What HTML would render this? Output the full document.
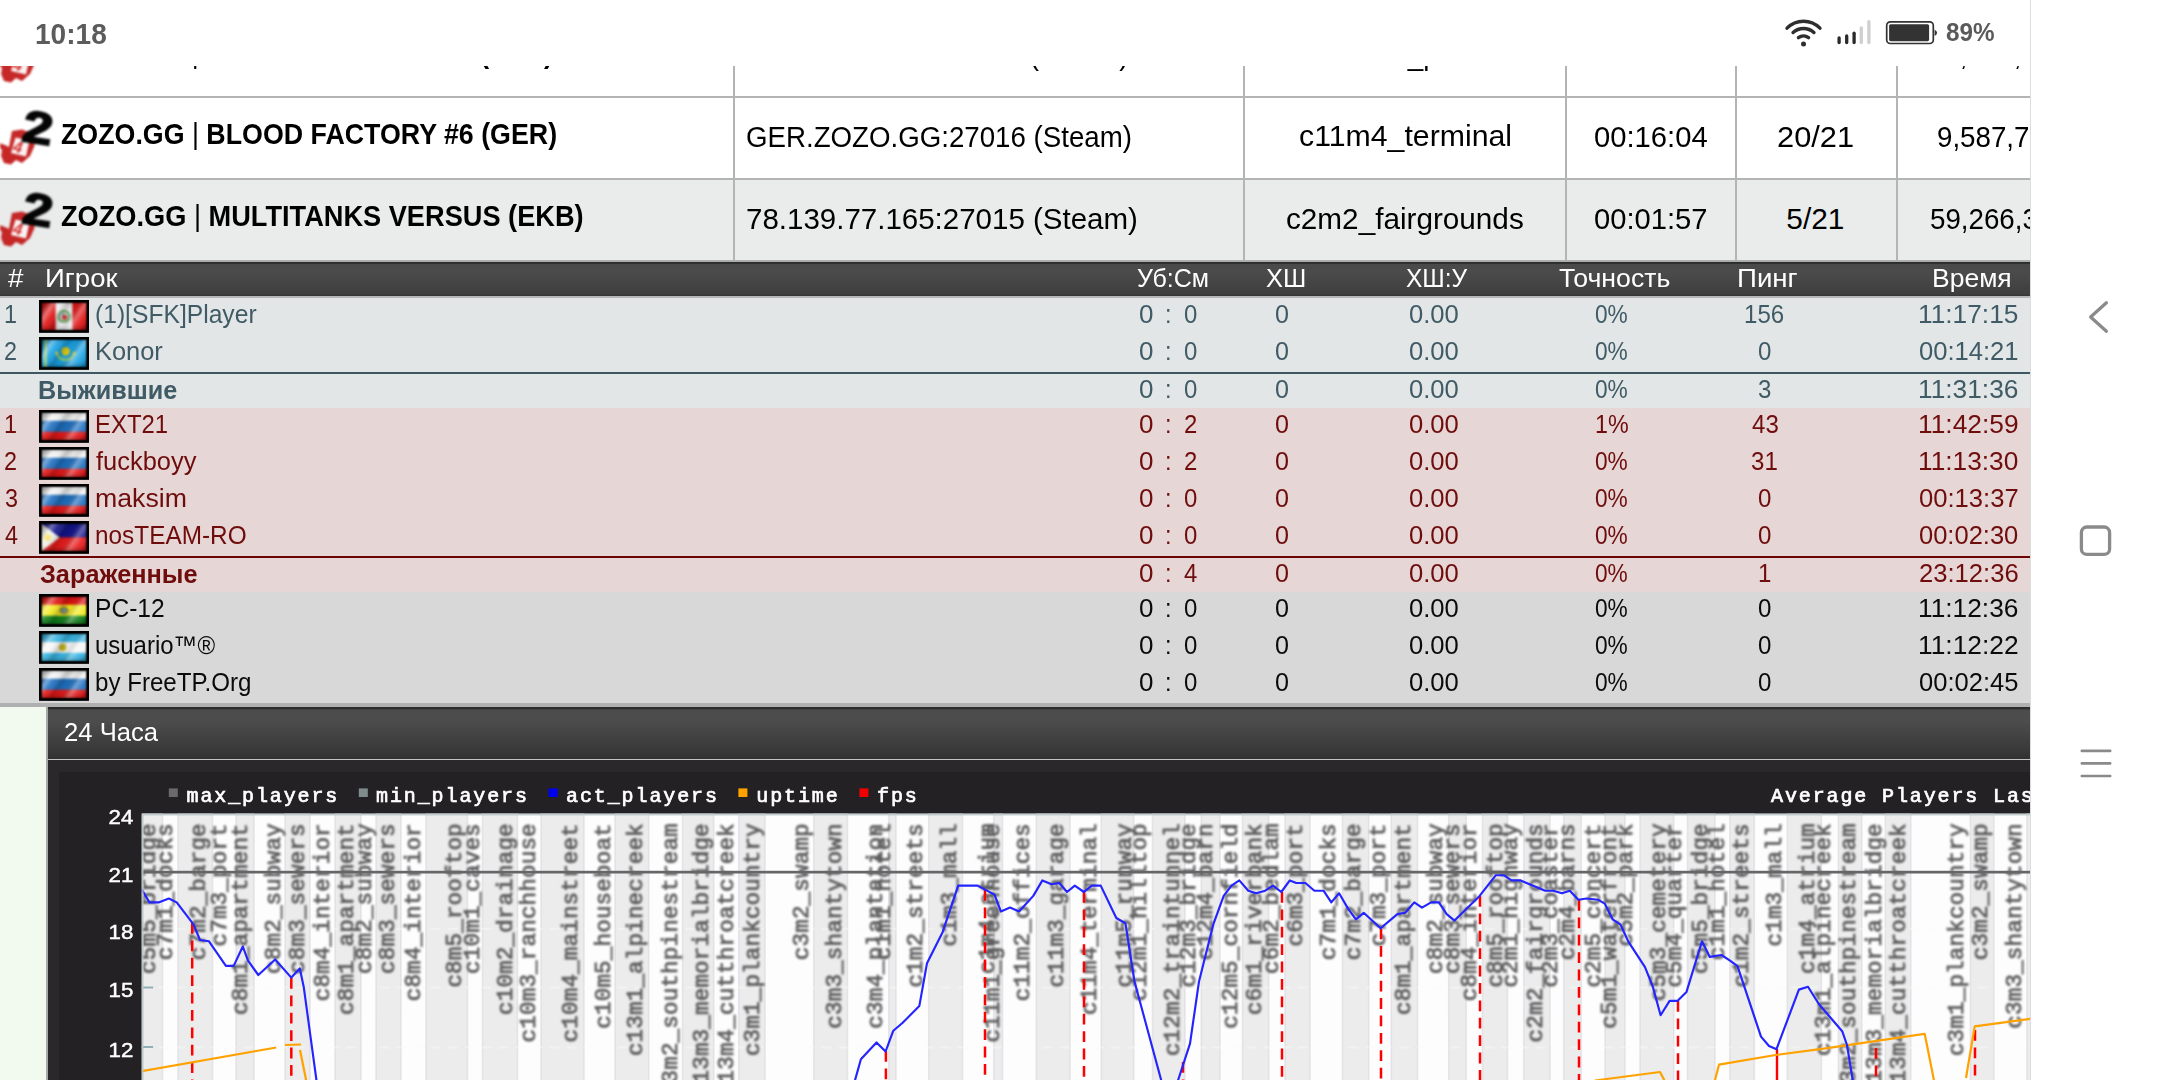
<!DOCTYPE html>
<html lang="ru">
<head>
<meta charset="utf-8">
<title>ZOZO.GG - HLstatsX</title>
<style>
html,body{margin:0;padding:0;background:#fff;}
body{width:2160px;height:1080px;overflow:hidden;position:relative;font-family:"Liberation Sans",sans-serif;}
.t{position:absolute;white-space:pre;line-height:1;transform-origin:0 0;display:block;}
#page{position:absolute;left:0;top:0;width:2030px;height:1080px;overflow:hidden;background:#fff;}
#status{position:absolute;left:0;top:0;width:2030px;height:66px;background:#fff;z-index:5;}
#nav{position:absolute;left:2030px;top:0;width:130px;height:1080px;background:#fff;border-left:1px solid #dcdcdc;box-sizing:border-box;}
</style>
</head>
<body>
<div id="page">
<div style="position:absolute;left:0px;top:66px;width:2030px;height:31px;background:#fff;"></div>
<div style="position:absolute;left:0px;top:98px;width:2030px;height:81px;background:#fff;"></div>
<div style="position:absolute;left:0px;top:180px;width:2030px;height:81px;background:#eaebeb;"></div>
<div style="position:absolute;left:0px;top:96px;width:2030px;height:2px;background:#b4b4b4;"></div>
<div style="position:absolute;left:0px;top:178px;width:2030px;height:2px;background:#b4b4b4;"></div>
<div style="position:absolute;left:733.4px;top:66px;width:1.8px;height:195px;background:#b4b4b4;"></div>
<div style="position:absolute;left:1243.4px;top:66px;width:1.8px;height:195px;background:#b4b4b4;"></div>
<div style="position:absolute;left:1564.9px;top:66px;width:1.8px;height:195px;background:#b4b4b4;"></div>
<div style="position:absolute;left:1734.9px;top:66px;width:1.8px;height:195px;background:#b4b4b4;"></div>
<div style="position:absolute;left:1895.9px;top:66px;width:1.8px;height:195px;background:#b4b4b4;"></div>
<svg style="position:absolute;left:0;top:20px;filter:blur(1px)" width="60" height="66" viewBox="0 0 60 66">
<path d="M12 29 L22 27.5 L34 32 L34.5 44 L30 54 L22 61 L16 58 L11 62.5 L4 61 L1 54 L2 48 L-1 45 L-1 41 L5 43 L9 45 Z" fill="#c21818" opacity="0.93"/>
<path d="M15.5 35.5 L29.5 38.5 L26 54.5 L11 51 Z" fill="#fbf3f3"/>
<text x="13.6" y="51" font-family="Liberation Sans, sans-serif" font-weight="bold" font-style="italic" font-size="16" fill="#d23030" transform="rotate(12 20 45)">4</text>
<text x="0" y="0" font-family="Liberation Sans, sans-serif" font-weight="bold" font-size="45" fill="#050505" stroke="#050505" stroke-width="1.8" transform="translate(20.8 38.8) rotate(9) scale(1.2 1)">2</text>
</svg>
<span class="t" style="left:60.52px;top:38.07px;font-size:29.80px;font-weight:bold;color:#000;transform:scaleX(0.8969);">ZOZO.GG <span style="font-weight:normal">|</span> BLOOD FACTORY #5 (SPB)</span>
<span class="t" style="left:745.72px;top:40.27px;font-size:29.80px;color:#000;transform:scaleX(0.9315);">SPB.ZOZO.GG:27015 (Steam)</span>
<span class="t" style="left:1339.84px;top:40.27px;font-size:29.80px;color:#000;transform:scaleX(0.9300);">c5m2_park</span>
<span class="t" style="left:1594.45px;top:40.27px;font-size:29.80px;color:#000;transform:scaleX(0.9300);">00:21:47</span>
<span class="t" style="left:1776.90px;top:40.27px;font-size:29.80px;color:#000;transform:scaleX(0.9300);">21/21</span>
<span class="t" style="left:1928.91px;top:40.27px;font-size:29.80px;color:#000;transform:scaleX(0.9300);">12,345,678</span>
<svg style="position:absolute;left:0;top:102px;filter:blur(1px)" width="60" height="66" viewBox="0 0 60 66">
<path d="M12 29 L22 27.5 L34 32 L34.5 44 L30 54 L22 61 L16 58 L11 62.5 L4 61 L1 54 L2 48 L-1 45 L-1 41 L5 43 L9 45 Z" fill="#c21818" opacity="0.93"/>
<path d="M15.5 35.5 L29.5 38.5 L26 54.5 L11 51 Z" fill="#fbf3f3"/>
<text x="13.6" y="51" font-family="Liberation Sans, sans-serif" font-weight="bold" font-style="italic" font-size="16" fill="#d23030" transform="rotate(12 20 45)">4</text>
<text x="0" y="0" font-family="Liberation Sans, sans-serif" font-weight="bold" font-size="45" fill="#050505" stroke="#050505" stroke-width="1.8" transform="translate(20.8 38.8) rotate(9) scale(1.2 1)">2</text>
</svg>
<span class="t" style="left:60.51px;top:119.27px;font-size:29.80px;font-weight:bold;color:#000;transform:scaleX(0.8989);">ZOZO.GG <span style="font-weight:normal">|</span> BLOOD FACTORY #6 (GER)</span>
<span class="t" style="left:745.61px;top:121.67px;font-size:29.80px;color:#000;transform:scaleX(0.9286);">GER.ZOZO.GG:27016 (Steam)</span>
<span class="t" style="left:1299.23px;top:121.37px;font-size:29.80px;color:#000;transform:scaleX(1.0158);">c11m4_terminal</span>
<span class="t" style="left:1594.40px;top:121.67px;font-size:29.80px;color:#000;transform:scaleX(0.9802);">00:16:04</span>
<span class="t" style="left:1776.75px;top:121.67px;font-size:29.80px;color:#000;transform:scaleX(1.0336);">20/21</span>
<span class="t" style="left:1937.42px;top:121.67px;font-size:29.80px;color:#000;transform:scaleX(0.9300);">9,587,712</span>
<svg style="position:absolute;left:0;top:184px;filter:blur(1px)" width="60" height="66" viewBox="0 0 60 66">
<path d="M12 29 L22 27.5 L34 32 L34.5 44 L30 54 L22 61 L16 58 L11 62.5 L4 61 L1 54 L2 48 L-1 45 L-1 41 L5 43 L9 45 Z" fill="#c21818" opacity="0.93"/>
<path d="M15.5 35.5 L29.5 38.5 L26 54.5 L11 51 Z" fill="#fbf3f3"/>
<text x="13.6" y="51" font-family="Liberation Sans, sans-serif" font-weight="bold" font-style="italic" font-size="16" fill="#d23030" transform="rotate(12 20 45)">4</text>
<text x="0" y="0" font-family="Liberation Sans, sans-serif" font-weight="bold" font-size="45" fill="#050505" stroke="#050505" stroke-width="1.8" transform="translate(20.8 38.8) rotate(9) scale(1.2 1)">2</text>
</svg>
<span class="t" style="left:60.50px;top:201.37px;font-size:29.80px;font-weight:bold;color:#000;transform:scaleX(0.9124);">ZOZO.GG <span style="font-weight:normal">|</span> MULTITANKS VERSUS (EKB)</span>
<span class="t" style="left:745.52px;top:204.07px;font-size:29.80px;color:#000;transform:scaleX(0.9898);">78.139.77.165:27015 (Steam)</span>
<span class="t" style="left:1286.25px;top:203.67px;font-size:29.80px;color:#000;transform:scaleX(0.9968);">c2m2_fairgrounds</span>
<span class="t" style="left:1594.40px;top:204.07px;font-size:29.80px;color:#000;transform:scaleX(0.9790);">00:01:57</span>
<span class="t" style="left:1786.35px;top:204.07px;font-size:29.80px;color:#000;">5/21</span>
<span class="t" style="left:1929.84px;top:204.07px;font-size:29.80px;color:#000;transform:scaleX(0.9300);">59,266,341</span>
<div style="position:absolute;left:0px;top:260px;width:2030px;height:2.2px;background:#adadad;"></div>
<div style="position:absolute;left:0px;top:262px;width:2030px;height:34px;background:linear-gradient(to bottom,#2a2a2a 0%,#2c2c2c 4%,#494949 7%,#4b4b4b 30%,#3e3e3e 95%,#333 100%);"></div>
<div style="position:absolute;left:0px;top:296px;width:2030px;height:2px;background:#b6b7b7;"></div>
<div style="position:absolute;left:0px;top:298px;width:2030px;height:110px;background:#e2e6e7;"></div>
<div style="position:absolute;left:0px;top:372.0px;width:2030px;height:2px;background:#3d5862;"></div>
<div style="position:absolute;left:0px;top:408px;width:2030px;height:184.3px;background:#e6d6d6;"></div>
<div style="position:absolute;left:0px;top:556.2px;width:2030px;height:2px;background:#6b0505;"></div>
<div style="position:absolute;left:0px;top:592.2px;width:2030px;height:111px;background:#d8d8d8;"></div>
<div style="position:absolute;left:0px;top:703px;width:2030px;height:3.6px;background:#b0b0b0;"></div>
<span class="t" style="left:7.67px;top:265.66px;font-size:25.80px;color:#fff;transform:scaleX(1.0761);">#</span>
<span class="t" style="left:44.73px;top:265.66px;font-size:25.80px;color:#fff;transform:scaleX(1.0677);">Игрок</span>
<span class="t" style="left:1136.77px;top:265.66px;font-size:25.80px;color:#fff;transform:scaleX(0.9720);">Уб:См</span>
<span class="t" style="left:1265.63px;top:265.66px;font-size:25.80px;color:#fff;transform:scaleX(0.9868);">ХШ</span>
<span class="t" style="left:1406.41px;top:265.66px;font-size:25.80px;color:#fff;transform:scaleX(0.9490);">ХШ:У</span>
<span class="t" style="left:1559.35px;top:265.66px;font-size:25.80px;color:#fff;transform:scaleX(1.0342);">Точность</span>
<span class="t" style="left:1737.22px;top:265.66px;font-size:25.80px;color:#fff;transform:scaleX(1.0723);">Пинг</span>
<span class="t" style="left:1932.32px;top:265.66px;font-size:25.80px;color:#fff;transform:scaleX(1.0272);">Время</span>
<svg width="0" height="0" style="position:absolute"><defs>
<linearGradient id="gl" gradientUnits="userSpaceOnUse" x1="2.2" y1="2.2" x2="47.2" y2="32.2">
<stop offset="0" stop-color="#000" stop-opacity="0.5"/><stop offset="0.07" stop-color="#000" stop-opacity="0.28"/>
<stop offset="0.19" stop-color="#fff" stop-opacity="0.42"/><stop offset="0.30" stop-color="#fff" stop-opacity="0.08"/>
<stop offset="0.42" stop-color="#000" stop-opacity="0.2"/><stop offset="0.55" stop-color="#000" stop-opacity="0.04"/>
<stop offset="0.69" stop-color="#fff" stop-opacity="0.36"/><stop offset="0.81" stop-color="#fff" stop-opacity="0.08"/>
<stop offset="0.92" stop-color="#000" stop-opacity="0.2"/><stop offset="1" stop-color="#000" stop-opacity="0.3"/>
</linearGradient>
<linearGradient id="gv" x1="0" y1="0" x2="0" y2="1">
<stop offset="0" stop-color="#000" stop-opacity="0.10"/><stop offset="0.2" stop-color="#000" stop-opacity="0"/>
<stop offset="0.8" stop-color="#000" stop-opacity="0"/><stop offset="1" stop-color="#000" stop-opacity="0.22"/>
</linearGradient>
<clipPath id="fc"><rect x="2.2" y="2.2" width="45.7" height="28.4"/></clipPath>
</defs></svg>
<span class="t" style="left:3.86px;top:302.27px;font-size:25.20px;color:#405b65;transform:scaleX(0.9300);">1</span>
<svg style="position:absolute;left:38.9px;top:300.1px" width="50.1" height="32.8" viewBox="0 0 50.1 32.8"><rect width="50.1" height="32.8" fill="#000"/><g clip-path="url(#fc)"><g style="filter:blur(0.95px)"><rect x="2.20" y="2.2" width="14.70" height="28.4" fill="#e01414"/><rect x="16.60" y="2.2" width="17.21" height="28.4" fill="#f6f6f6"/><rect x="33.50" y="2.2" width="14.70" height="28.4" fill="#e01414"/><circle cx="25" cy="16.4" r="5.3" fill="none" stroke="#55a050" stroke-width="2.8" opacity="0.8"/><circle cx="25.6" cy="17.2" r="2.7" fill="#d83a3a"/><circle cx="24.2" cy="14.8" r="1.2" fill="#5a7fc0" opacity="0.8"/><rect x="2.2" y="2.2" width="45.7" height="28.4" fill="url(#gl)"/><rect x="2.2" y="2.2" width="45.7" height="28.4" fill="url(#gv)"/></g></g><rect x="1.6" y="1.6" width="46.9" height="29.599999999999998" fill="none" stroke="#000" stroke-width="1.4" style="filter:blur(0.8px)"/></svg>
<span class="t" style="left:95.33px;top:302.27px;font-size:25.20px;color:#405b65;transform:scaleX(0.9785);">(1)[SFK]Player</span>
<span class="t" style="left:1138.97px;top:302.27px;font-size:25.20px;color:#405b65;transform:scaleX(1.0309);">0</span>
<span class="t" style="left:1164.91px;top:302.27px;font-size:25.20px;color:#405b65;transform:scaleX(0.9300);">:</span>
<span class="t" style="left:1184.05px;top:302.27px;font-size:25.20px;color:#405b65;transform:scaleX(0.9500);">0</span>
<span class="t" style="left:1274.50px;top:302.27px;font-size:25.20px;color:#405b65;transform:scaleX(0.9979);">0</span>
<span class="t" style="left:1408.98px;top:302.27px;font-size:25.20px;color:#405b65;transform:scaleX(1.0159);">0.00</span>
<span class="t" style="left:1595.40px;top:302.27px;font-size:25.20px;color:#405b65;transform:scaleX(0.9011);">0%</span>
<span class="t" style="left:1744.27px;top:302.27px;font-size:25.20px;color:#405b65;transform:scaleX(0.9550);">156</span>
<span class="t" style="left:1918.04px;top:302.27px;font-size:25.20px;color:#405b65;transform:scaleX(1.0439);">11:17:15</span>
<span class="t" style="left:4.44px;top:339.27px;font-size:25.20px;color:#405b65;transform:scaleX(0.9300);">2</span>
<svg style="position:absolute;left:38.9px;top:337.0px" width="50.1" height="32.8" viewBox="0 0 50.1 32.8"><rect width="50.1" height="32.8" fill="#000"/><g clip-path="url(#fc)"><g style="filter:blur(0.95px)"><rect x="2.2" y="2.2" width="45.7" height="28.4" fill="#19a2e4"/><rect x="5.4" y="2.2" width="2.6" height="28.4" fill="#b9d94c" opacity="0.8"/><circle cx="26.6" cy="14.2" r="4.2" fill="#e3d012"/><path d="M17.8 15.5 q1.2 6.8 8.6 7.4 q7.8 -0.6 9.2 -7.4" fill="none" stroke="#b9d84a" stroke-width="2.1" stroke-linecap="round" opacity="0.85"/><circle cx="18" cy="16.4" r="1.7" fill="#c6d93a" opacity="0.9"/><circle cx="35.2" cy="16.2" r="1.7" fill="#c6d93a" opacity="0.9"/><rect x="2.2" y="2.2" width="45.7" height="28.4" fill="url(#gl)"/><rect x="2.2" y="2.2" width="45.7" height="28.4" fill="url(#gv)"/></g></g><rect x="1.6" y="1.6" width="46.9" height="29.599999999999998" fill="none" stroke="#000" stroke-width="1.4" style="filter:blur(0.8px)"/></svg>
<span class="t" style="left:94.78px;top:339.27px;font-size:25.20px;color:#405b65;transform:scaleX(1.0092);">Konor</span>
<span class="t" style="left:1138.97px;top:339.27px;font-size:25.20px;color:#405b65;transform:scaleX(1.0309);">0</span>
<span class="t" style="left:1164.91px;top:339.27px;font-size:25.20px;color:#405b65;transform:scaleX(0.9300);">:</span>
<span class="t" style="left:1184.05px;top:339.27px;font-size:25.20px;color:#405b65;transform:scaleX(0.9500);">0</span>
<span class="t" style="left:1274.50px;top:339.27px;font-size:25.20px;color:#405b65;transform:scaleX(0.9979);">0</span>
<span class="t" style="left:1408.98px;top:339.27px;font-size:25.20px;color:#405b65;transform:scaleX(1.0159);">0.00</span>
<span class="t" style="left:1595.40px;top:339.27px;font-size:25.20px;color:#405b65;transform:scaleX(0.9011);">0%</span>
<span class="t" style="left:1758.06px;top:339.27px;font-size:25.20px;color:#405b65;transform:scaleX(0.9550);">0</span>
<span class="t" style="left:1918.98px;top:339.27px;font-size:25.20px;color:#405b65;transform:scaleX(1.0153);">00:14:21</span>
<span class="t" style="left:38.47px;top:377.71px;font-size:25.50px;font-weight:bold;color:#405b65;transform:scaleX(0.9897);">Выжившие</span>
<span class="t" style="left:1138.97px;top:377.27px;font-size:25.20px;color:#405b65;transform:scaleX(1.0309);">0</span>
<span class="t" style="left:1164.91px;top:377.27px;font-size:25.20px;color:#405b65;transform:scaleX(0.9300);">:</span>
<span class="t" style="left:1184.05px;top:377.27px;font-size:25.20px;color:#405b65;transform:scaleX(0.9500);">0</span>
<span class="t" style="left:1274.50px;top:377.27px;font-size:25.20px;color:#405b65;transform:scaleX(0.9979);">0</span>
<span class="t" style="left:1408.98px;top:377.27px;font-size:25.20px;color:#405b65;transform:scaleX(1.0159);">0.00</span>
<span class="t" style="left:1595.40px;top:377.27px;font-size:25.20px;color:#405b65;transform:scaleX(0.9011);">0%</span>
<span class="t" style="left:1758.12px;top:377.27px;font-size:25.20px;color:#405b65;transform:scaleX(0.9550);">3</span>
<span class="t" style="left:1918.04px;top:377.27px;font-size:25.20px;color:#405b65;transform:scaleX(1.0439);">11:31:36</span>
<span class="t" style="left:3.86px;top:412.27px;font-size:25.20px;color:#6f0c0c;transform:scaleX(0.9300);">1</span>
<svg style="position:absolute;left:38.9px;top:410.1px" width="50.1" height="32.8" viewBox="0 0 50.1 32.8"><rect width="50.1" height="32.8" fill="#000"/><g clip-path="url(#fc)"><g style="filter:blur(0.95px)"><rect x="2.2" y="2.20" width="45.7" height="8.82" fill="#f4f4f4"/><rect x="2.2" y="10.72" width="45.7" height="11.38" fill="#1f70c0"/><rect x="2.2" y="21.80" width="45.7" height="9.10" fill="#e81818"/><rect x="2.2" y="2.2" width="45.7" height="28.4" fill="url(#gl)"/><rect x="2.2" y="2.2" width="45.7" height="28.4" fill="url(#gv)"/></g></g><rect x="1.6" y="1.6" width="46.9" height="29.599999999999998" fill="none" stroke="#000" stroke-width="1.4" style="filter:blur(0.8px)"/></svg>
<span class="t" style="left:94.90px;top:412.27px;font-size:25.20px;color:#6f0c0c;transform:scaleX(0.9500);">EXT21</span>
<span class="t" style="left:1138.97px;top:412.27px;font-size:25.20px;color:#6f0c0c;transform:scaleX(1.0309);">0</span>
<span class="t" style="left:1164.91px;top:412.27px;font-size:25.20px;color:#6f0c0c;transform:scaleX(0.9300);">:</span>
<span class="t" style="left:1183.81px;top:412.27px;font-size:25.20px;color:#6f0c0c;transform:scaleX(0.9500);">2</span>
<span class="t" style="left:1274.50px;top:412.27px;font-size:25.20px;color:#6f0c0c;transform:scaleX(0.9979);">0</span>
<span class="t" style="left:1408.98px;top:412.27px;font-size:25.20px;color:#6f0c0c;transform:scaleX(1.0159);">0.00</span>
<span class="t" style="left:1594.57px;top:412.27px;font-size:25.20px;color:#6f0c0c;transform:scaleX(0.9244);">1%</span>
<span class="t" style="left:1751.61px;top:412.27px;font-size:25.20px;color:#6f0c0c;transform:scaleX(0.9550);">43</span>
<span class="t" style="left:1918.04px;top:412.27px;font-size:25.20px;color:#6f0c0c;transform:scaleX(1.0452);">11:42:59</span>
<span class="t" style="left:4.44px;top:449.27px;font-size:25.20px;color:#6f0c0c;transform:scaleX(0.9300);">2</span>
<svg style="position:absolute;left:38.9px;top:447.1px" width="50.1" height="32.8" viewBox="0 0 50.1 32.8"><rect width="50.1" height="32.8" fill="#000"/><g clip-path="url(#fc)"><g style="filter:blur(0.95px)"><rect x="2.2" y="2.20" width="45.7" height="8.82" fill="#f4f4f4"/><rect x="2.2" y="10.72" width="45.7" height="11.38" fill="#1f70c0"/><rect x="2.2" y="21.80" width="45.7" height="9.10" fill="#e81818"/><rect x="2.2" y="2.2" width="45.7" height="28.4" fill="url(#gl)"/><rect x="2.2" y="2.2" width="45.7" height="28.4" fill="url(#gv)"/></g></g><rect x="1.6" y="1.6" width="46.9" height="29.599999999999998" fill="none" stroke="#000" stroke-width="1.4" style="filter:blur(0.8px)"/></svg>
<span class="t" style="left:96.42px;top:449.27px;font-size:25.20px;color:#6f0c0c;transform:scaleX(1.0106);">fuckboyy</span>
<span class="t" style="left:1138.97px;top:449.27px;font-size:25.20px;color:#6f0c0c;transform:scaleX(1.0309);">0</span>
<span class="t" style="left:1164.91px;top:449.27px;font-size:25.20px;color:#6f0c0c;transform:scaleX(0.9300);">:</span>
<span class="t" style="left:1183.81px;top:449.27px;font-size:25.20px;color:#6f0c0c;transform:scaleX(0.9500);">2</span>
<span class="t" style="left:1274.50px;top:449.27px;font-size:25.20px;color:#6f0c0c;transform:scaleX(0.9979);">0</span>
<span class="t" style="left:1408.98px;top:449.27px;font-size:25.20px;color:#6f0c0c;transform:scaleX(1.0159);">0.00</span>
<span class="t" style="left:1595.40px;top:449.27px;font-size:25.20px;color:#6f0c0c;transform:scaleX(0.9011);">0%</span>
<span class="t" style="left:1751.49px;top:449.27px;font-size:25.20px;color:#6f0c0c;transform:scaleX(0.9550);">31</span>
<span class="t" style="left:1918.05px;top:449.27px;font-size:25.20px;color:#6f0c0c;transform:scaleX(1.0425);">11:13:30</span>
<span class="t" style="left:4.67px;top:486.27px;font-size:25.20px;color:#6f0c0c;transform:scaleX(0.9300);">3</span>
<svg style="position:absolute;left:38.9px;top:484.1px" width="50.1" height="32.8" viewBox="0 0 50.1 32.8"><rect width="50.1" height="32.8" fill="#000"/><g clip-path="url(#fc)"><g style="filter:blur(0.95px)"><rect x="2.2" y="2.20" width="45.7" height="8.82" fill="#f4f4f4"/><rect x="2.2" y="10.72" width="45.7" height="11.38" fill="#1f70c0"/><rect x="2.2" y="21.80" width="45.7" height="9.10" fill="#e81818"/><rect x="2.2" y="2.2" width="45.7" height="28.4" fill="url(#gl)"/><rect x="2.2" y="2.2" width="45.7" height="28.4" fill="url(#gv)"/></g></g><rect x="1.6" y="1.6" width="46.9" height="29.599999999999998" fill="none" stroke="#000" stroke-width="1.4" style="filter:blur(0.8px)"/></svg>
<span class="t" style="left:95.08px;top:486.27px;font-size:25.20px;color:#6f0c0c;transform:scaleX(1.0595);">maksim</span>
<span class="t" style="left:1138.97px;top:486.27px;font-size:25.20px;color:#6f0c0c;transform:scaleX(1.0309);">0</span>
<span class="t" style="left:1164.91px;top:486.27px;font-size:25.20px;color:#6f0c0c;transform:scaleX(0.9300);">:</span>
<span class="t" style="left:1184.05px;top:486.27px;font-size:25.20px;color:#6f0c0c;transform:scaleX(0.9500);">0</span>
<span class="t" style="left:1274.50px;top:486.27px;font-size:25.20px;color:#6f0c0c;transform:scaleX(0.9979);">0</span>
<span class="t" style="left:1408.98px;top:486.27px;font-size:25.20px;color:#6f0c0c;transform:scaleX(1.0159);">0.00</span>
<span class="t" style="left:1595.40px;top:486.27px;font-size:25.20px;color:#6f0c0c;transform:scaleX(0.9011);">0%</span>
<span class="t" style="left:1758.06px;top:486.27px;font-size:25.20px;color:#6f0c0c;transform:scaleX(0.9550);">0</span>
<span class="t" style="left:1918.98px;top:486.27px;font-size:25.20px;color:#6f0c0c;transform:scaleX(1.0167);">00:13:37</span>
<span class="t" style="left:5.02px;top:523.27px;font-size:25.20px;color:#6f0c0c;transform:scaleX(0.9300);">4</span>
<svg style="position:absolute;left:38.9px;top:521.1px" width="50.1" height="32.8" viewBox="0 0 50.1 32.8"><rect width="50.1" height="32.8" fill="#000"/><g clip-path="url(#fc)"><g style="filter:blur(0.95px)"><rect x="2.2" y="2.2" width="45.7" height="14.40" fill="#14148c"/><rect x="2.2" y="16.40" width="45.7" height="14.20" fill="#ea1c1c"/><path d="M2.2 2.2 L20.7 16.40 L2.2 30.599999999999998 Z" fill="#efefe6"/><circle cx="8.3" cy="16.4" r="3.3" fill="#f3dc4a"/><rect x="2.2" y="2.2" width="45.7" height="28.4" fill="url(#gl)"/><rect x="2.2" y="2.2" width="45.7" height="28.4" fill="url(#gv)"/></g></g><rect x="1.6" y="1.6" width="46.9" height="29.599999999999998" fill="none" stroke="#000" stroke-width="1.4" style="filter:blur(0.8px)"/></svg>
<span class="t" style="left:95.23px;top:523.27px;font-size:25.20px;color:#6f0c0c;transform:scaleX(0.9671);">nosTEAM-RO</span>
<span class="t" style="left:1138.97px;top:523.27px;font-size:25.20px;color:#6f0c0c;transform:scaleX(1.0309);">0</span>
<span class="t" style="left:1164.91px;top:523.27px;font-size:25.20px;color:#6f0c0c;transform:scaleX(0.9300);">:</span>
<span class="t" style="left:1184.05px;top:523.27px;font-size:25.20px;color:#6f0c0c;transform:scaleX(0.9500);">0</span>
<span class="t" style="left:1274.50px;top:523.27px;font-size:25.20px;color:#6f0c0c;transform:scaleX(0.9979);">0</span>
<span class="t" style="left:1408.98px;top:523.27px;font-size:25.20px;color:#6f0c0c;transform:scaleX(1.0159);">0.00</span>
<span class="t" style="left:1595.40px;top:523.27px;font-size:25.20px;color:#6f0c0c;transform:scaleX(0.9011);">0%</span>
<span class="t" style="left:1758.06px;top:523.27px;font-size:25.20px;color:#6f0c0c;transform:scaleX(0.9550);">0</span>
<span class="t" style="left:1918.99px;top:523.27px;font-size:25.20px;color:#6f0c0c;transform:scaleX(1.0127);">00:02:30</span>
<span class="t" style="left:39.58px;top:561.71px;font-size:25.50px;font-weight:bold;color:#6f0c0c;transform:scaleX(0.9935);">Зараженные</span>
<span class="t" style="left:1138.97px;top:561.27px;font-size:25.20px;color:#6f0c0c;transform:scaleX(1.0309);">0</span>
<span class="t" style="left:1164.91px;top:561.27px;font-size:25.20px;color:#6f0c0c;transform:scaleX(0.9300);">:</span>
<span class="t" style="left:1184.41px;top:561.27px;font-size:25.20px;color:#6f0c0c;transform:scaleX(0.9500);">4</span>
<span class="t" style="left:1274.50px;top:561.27px;font-size:25.20px;color:#6f0c0c;transform:scaleX(0.9979);">0</span>
<span class="t" style="left:1408.98px;top:561.27px;font-size:25.20px;color:#6f0c0c;transform:scaleX(1.0159);">0.00</span>
<span class="t" style="left:1595.40px;top:561.27px;font-size:25.20px;color:#6f0c0c;transform:scaleX(0.9011);">0%</span>
<span class="t" style="left:1757.76px;top:561.27px;font-size:25.20px;color:#6f0c0c;transform:scaleX(0.9550);">1</span>
<span class="t" style="left:1918.73px;top:561.27px;font-size:25.20px;color:#6f0c0c;transform:scaleX(1.0167);">23:12:36</span>
<svg style="position:absolute;left:38.9px;top:594.1px" width="50.1" height="32.8" viewBox="0 0 50.1 32.8"><rect width="50.1" height="32.8" fill="#000"/><g clip-path="url(#fc)"><g style="filter:blur(0.95px)"><rect x="2.2" y="2.20" width="45.7" height="8.82" fill="#e41212"/><rect x="2.2" y="10.72" width="45.7" height="11.38" fill="#f2ea22"/><rect x="2.2" y="21.80" width="45.7" height="9.10" fill="#13831d"/><ellipse cx="25" cy="16.6" rx="4.8" ry="4.2" fill="#b07a28" opacity="0.9"/><ellipse cx="25" cy="16.6" rx="2.8" ry="2.6" fill="#5d9a90"/><rect x="2.2" y="2.2" width="45.7" height="28.4" fill="url(#gl)"/><rect x="2.2" y="2.2" width="45.7" height="28.4" fill="url(#gv)"/></g></g><rect x="1.6" y="1.6" width="46.9" height="29.599999999999998" fill="none" stroke="#000" stroke-width="1.4" style="filter:blur(0.8px)"/></svg>
<span class="t" style="left:94.85px;top:596.27px;font-size:25.20px;color:#0b0b0b;transform:scaleX(0.9758);">PC-12</span>
<span class="t" style="left:1138.97px;top:596.27px;font-size:25.20px;color:#0b0b0b;transform:scaleX(1.0309);">0</span>
<span class="t" style="left:1164.91px;top:596.27px;font-size:25.20px;color:#0b0b0b;transform:scaleX(0.9300);">:</span>
<span class="t" style="left:1184.05px;top:596.27px;font-size:25.20px;color:#0b0b0b;transform:scaleX(0.9500);">0</span>
<span class="t" style="left:1274.50px;top:596.27px;font-size:25.20px;color:#0b0b0b;transform:scaleX(0.9979);">0</span>
<span class="t" style="left:1408.98px;top:596.27px;font-size:25.20px;color:#0b0b0b;transform:scaleX(1.0159);">0.00</span>
<span class="t" style="left:1595.40px;top:596.27px;font-size:25.20px;color:#0b0b0b;transform:scaleX(0.9011);">0%</span>
<span class="t" style="left:1758.06px;top:596.27px;font-size:25.20px;color:#0b0b0b;transform:scaleX(0.9550);">0</span>
<span class="t" style="left:1918.04px;top:596.27px;font-size:25.20px;color:#0b0b0b;transform:scaleX(1.0439);">11:12:36</span>
<svg style="position:absolute;left:38.9px;top:631.0px" width="50.1" height="32.8" viewBox="0 0 50.1 32.8"><rect width="50.1" height="32.8" fill="#000"/><g clip-path="url(#fc)"><g style="filter:blur(0.95px)"><rect x="2.2" y="2.20" width="45.7" height="9.10" fill="#3ab8e6"/><rect x="2.2" y="11.00" width="45.7" height="11.09" fill="#f6f6f6"/><rect x="2.2" y="21.80" width="45.7" height="9.10" fill="#3ab8e6"/><circle cx="23.6" cy="16.4" r="3.7" fill="#c9b81e"/><rect x="2.2" y="2.2" width="45.7" height="28.4" fill="url(#gl)"/><rect x="2.2" y="2.2" width="45.7" height="28.4" fill="url(#gv)"/></g></g><rect x="1.6" y="1.6" width="46.9" height="29.599999999999998" fill="none" stroke="#000" stroke-width="1.4" style="filter:blur(0.8px)"/></svg>
<span class="t" style="left:95.26px;top:633.27px;font-size:25.20px;color:#0b0b0b;transform:scaleX(0.9507);">usuario™®</span>
<span class="t" style="left:1138.97px;top:633.27px;font-size:25.20px;color:#0b0b0b;transform:scaleX(1.0309);">0</span>
<span class="t" style="left:1164.91px;top:633.27px;font-size:25.20px;color:#0b0b0b;transform:scaleX(0.9300);">:</span>
<span class="t" style="left:1184.05px;top:633.27px;font-size:25.20px;color:#0b0b0b;transform:scaleX(0.9500);">0</span>
<span class="t" style="left:1274.50px;top:633.27px;font-size:25.20px;color:#0b0b0b;transform:scaleX(0.9979);">0</span>
<span class="t" style="left:1408.98px;top:633.27px;font-size:25.20px;color:#0b0b0b;transform:scaleX(1.0159);">0.00</span>
<span class="t" style="left:1595.40px;top:633.27px;font-size:25.20px;color:#0b0b0b;transform:scaleX(0.9011);">0%</span>
<span class="t" style="left:1758.06px;top:633.27px;font-size:25.20px;color:#0b0b0b;transform:scaleX(0.9550);">0</span>
<span class="t" style="left:1918.04px;top:633.27px;font-size:25.20px;color:#0b0b0b;transform:scaleX(1.0466);">11:12:22</span>
<svg style="position:absolute;left:38.9px;top:668.0px" width="50.1" height="32.8" viewBox="0 0 50.1 32.8"><rect width="50.1" height="32.8" fill="#000"/><g clip-path="url(#fc)"><g style="filter:blur(0.95px)"><rect x="2.2" y="2.20" width="45.7" height="8.82" fill="#f4f4f4"/><rect x="2.2" y="10.72" width="45.7" height="11.38" fill="#1f70c0"/><rect x="2.2" y="21.80" width="45.7" height="9.10" fill="#e81818"/><rect x="2.2" y="2.2" width="45.7" height="28.4" fill="url(#gl)"/><rect x="2.2" y="2.2" width="45.7" height="28.4" fill="url(#gv)"/></g></g><rect x="1.6" y="1.6" width="46.9" height="29.599999999999998" fill="none" stroke="#000" stroke-width="1.4" style="filter:blur(0.8px)"/></svg>
<span class="t" style="left:95.24px;top:670.27px;font-size:25.20px;color:#0b0b0b;transform:scaleX(0.9578);">by FreeTP.Org</span>
<span class="t" style="left:1138.97px;top:670.27px;font-size:25.20px;color:#0b0b0b;transform:scaleX(1.0309);">0</span>
<span class="t" style="left:1164.91px;top:670.27px;font-size:25.20px;color:#0b0b0b;transform:scaleX(0.9300);">:</span>
<span class="t" style="left:1184.05px;top:670.27px;font-size:25.20px;color:#0b0b0b;transform:scaleX(0.9500);">0</span>
<span class="t" style="left:1274.50px;top:670.27px;font-size:25.20px;color:#0b0b0b;transform:scaleX(0.9979);">0</span>
<span class="t" style="left:1408.98px;top:670.27px;font-size:25.20px;color:#0b0b0b;transform:scaleX(1.0159);">0.00</span>
<span class="t" style="left:1595.40px;top:670.27px;font-size:25.20px;color:#0b0b0b;transform:scaleX(0.9011);">0%</span>
<span class="t" style="left:1758.06px;top:670.27px;font-size:25.20px;color:#0b0b0b;transform:scaleX(0.9550);">0</span>
<span class="t" style="left:1918.99px;top:670.27px;font-size:25.20px;color:#0b0b0b;transform:scaleX(1.0140);">00:02:45</span>
<div style="position:absolute;left:0px;top:706.5px;width:46.4px;height:374px;background:#f2f9ef;"></div>
<div style="position:absolute;left:46.2px;top:706.5px;width:2px;height:374px;background:#a8a8a8;"></div>
<div style="position:absolute;left:48px;top:706.8px;width:1982px;height:52px;background:linear-gradient(to bottom,#2b2b2b 0%,#2d2d2d 3%,#4c4c4c 6%,#4d4d4d 25%,#3a3a3a 80%,#303030 100%);"></div>
<div style="position:absolute;left:48px;top:758.6px;width:1982px;height:1.9px;background:#c2c2c2;"></div>
<div style="position:absolute;left:48px;top:760.4px;width:1982px;height:320px;background:#2a282b;"></div>
<div style="position:absolute;left:59.2px;top:771.8px;width:1971px;height:309px;background:#232124;"></div>
<span class="t" style="left:64.36px;top:720.16px;font-size:25.80px;color:#fff;transform:scaleX(0.9941);">24 Часа</span>
<svg style="position:absolute;left:0;top:0" width="2030" height="1080" viewBox="0 0 2030 1080" font-family="Liberation Mono, monospace">
<defs><clipPath id="plot"><rect x="141.6" y="813.4" width="1888.4" height="266.6"/></clipPath><filter id="b1" x="-5%" y="-5%" width="110%" height="110%"><feGaussianBlur stdDeviation="0.8"/></filter><filter id="b2" x="-5%" y="-5%" width="110%" height="110%"><feGaussianBlur stdDeviation="0.55"/></filter></defs>
<rect x="168.8" y="788.4" width="9" height="8.6" fill="#6a6a6c"/><text x="186.5" y="801.8" font-size="20" letter-spacing="1.88" stroke="#fff" stroke-width="0.7" fill="#fff" filter="url(#b2)">max_players</text>
<rect x="358.8" y="788.4" width="9" height="8.6" fill="#7e8c8c"/><text x="376.1" y="801.8" font-size="20" letter-spacing="1.88" stroke="#fff" stroke-width="0.7" fill="#fff" filter="url(#b2)">min_players</text>
<rect x="548.6" y="788.4" width="9" height="8.6" fill="#0000f0"/><text x="566.1" y="801.8" font-size="20" letter-spacing="1.88" stroke="#fff" stroke-width="0.7" fill="#fff" filter="url(#b2)">act_players</text>
<rect x="738.4" y="788.4" width="9" height="8.6" fill="#ffa200"/><text x="756.3" y="801.8" font-size="20" letter-spacing="1.88" stroke="#fff" stroke-width="0.7" fill="#fff" filter="url(#b2)">uptime</text>
<rect x="859.4" y="788.4" width="9" height="8.6" fill="#f00000"/><text x="877.1" y="801.8" font-size="20" letter-spacing="1.88" stroke="#fff" stroke-width="0.7" fill="#fff" filter="url(#b2)">fps</text>
<text x="1771" y="801.8" font-size="20" letter-spacing="1.88" stroke="#fff" stroke-width="0.7" fill="#fff" filter="url(#b2)">Average Players Last 24h: 11.87</text>
<text x="108.6" y="823.8" font-family="Liberation Sans, sans-serif" font-size="20.4" fill="#fff" stroke="#fff" stroke-width="0.45" filter="url(#b2)" textLength="24.8" lengthAdjust="spacingAndGlyphs">24</text>
<text x="108.6" y="881.6" font-family="Liberation Sans, sans-serif" font-size="20.4" fill="#fff" stroke="#fff" stroke-width="0.45" filter="url(#b2)" textLength="24.8" lengthAdjust="spacingAndGlyphs">21</text>
<text x="108.6" y="939.2" font-family="Liberation Sans, sans-serif" font-size="20.4" fill="#fff" stroke="#fff" stroke-width="0.45" filter="url(#b2)" textLength="24.8" lengthAdjust="spacingAndGlyphs">18</text>
<text x="108.6" y="996.9" font-family="Liberation Sans, sans-serif" font-size="20.4" fill="#fff" stroke="#fff" stroke-width="0.45" filter="url(#b2)" textLength="24.8" lengthAdjust="spacingAndGlyphs">15</text>
<text x="108.6" y="1057.0" font-family="Liberation Sans, sans-serif" font-size="20.4" fill="#fff" stroke="#fff" stroke-width="0.45" filter="url(#b2)" textLength="24.8" lengthAdjust="spacingAndGlyphs">12</text>
<g clip-path="url(#plot)">
<rect x="141.6" y="813.4" width="1888.4" height="266.6" fill="#fcfdfc"/>
<rect x="141.75" y="813.4" width="20.75" height="266.6" fill="#ebeceb"/>
<rect x="178.00" y="813.4" width="34.50" height="266.6" fill="#ebeceb"/>
<rect x="236.00" y="813.4" width="18.00" height="266.6" fill="#ebeceb"/>
<rect x="285.00" y="813.4" width="25.00" height="266.6" fill="#ebeceb"/>
<rect x="335.00" y="813.4" width="26.00" height="266.6" fill="#ebeceb"/>
<rect x="376.00" y="813.4" width="25.00" height="266.6" fill="#ebeceb"/>
<rect x="426.00" y="813.4" width="41.50" height="266.6" fill="#ebeceb"/>
<rect x="482.50" y="813.4" width="35.00" height="266.6" fill="#ebeceb"/>
<rect x="541.00" y="813.4" width="43.00" height="266.6" fill="#ebeceb"/>
<rect x="615.00" y="813.4" width="33.75" height="266.6" fill="#ebeceb"/>
<rect x="682.50" y="813.4" width="31.25" height="266.6" fill="#ebeceb"/>
<rect x="738.75" y="813.4" width="26.25" height="266.6" fill="#ebeceb"/>
<rect x="813.75" y="813.4" width="33.75" height="266.6" fill="#ebeceb"/>
<rect x="888.75" y="813.4" width="7.25" height="266.6" fill="#ebeceb"/>
<rect x="928.75" y="813.4" width="33.75" height="266.6" fill="#ebeceb"/>
<rect x="993.75" y="813.4" width="8.75" height="266.6" fill="#ebeceb"/>
<rect x="1036.25" y="813.4" width="33.75" height="266.6" fill="#ebeceb"/>
<rect x="1101.25" y="813.4" width="32.50" height="266.6" fill="#ebeceb"/>
<rect x="1152.50" y="813.4" width="32.50" height="266.6" fill="#ebeceb"/>
<rect x="1201.25" y="813.4" width="18.75" height="266.6" fill="#ebeceb"/>
<rect x="1242.50" y="813.4" width="26.25" height="266.6" fill="#ebeceb"/>
<rect x="1285.00" y="813.4" width="25.00" height="266.6" fill="#ebeceb"/>
<rect x="1342.50" y="813.4" width="26.25" height="266.6" fill="#ebeceb"/>
<rect x="1391.25" y="813.4" width="26.25" height="266.6" fill="#ebeceb"/>
<rect x="1448.75" y="813.4" width="17.50" height="266.6" fill="#ebeceb"/>
<rect x="1482.50" y="813.4" width="25.00" height="266.6" fill="#ebeceb"/>
<rect x="1523.75" y="813.4" width="26.25" height="266.6" fill="#ebeceb"/>
<rect x="1563.75" y="813.4" width="17.50" height="266.6" fill="#ebeceb"/>
<rect x="1605.00" y="813.4" width="20.00" height="266.6" fill="#ebeceb"/>
<rect x="1640.00" y="813.4" width="33.75" height="266.6" fill="#ebeceb"/>
<rect x="1687.50" y="813.4" width="27.50" height="266.6" fill="#ebeceb"/>
<rect x="1729.80" y="813.4" width="24.50" height="266.6" fill="#ebeceb"/>
<rect x="1787.30" y="813.4" width="34.10" height="266.6" fill="#ebeceb"/>
<rect x="1838.40" y="813.4" width="23.40" height="266.6" fill="#ebeceb"/>
<rect x="1885.30" y="813.4" width="25.50" height="266.6" fill="#ebeceb"/>
<rect x="1970.40" y="813.4" width="23.50" height="266.6" fill="#ebeceb"/>
<rect x="2026.90" y="813.4" width="13.10" height="266.6" fill="#ebeceb"/>
<path d="M162.50 813.4V1080 M178.00 813.4V1080 M212.50 813.4V1080 M236.00 813.4V1080 M254.00 813.4V1080 M285.00 813.4V1080 M310.00 813.4V1080 M335.00 813.4V1080 M361.00 813.4V1080 M376.00 813.4V1080 M401.00 813.4V1080 M426.00 813.4V1080 M467.50 813.4V1080 M482.50 813.4V1080 M517.50 813.4V1080 M541.00 813.4V1080 M584.00 813.4V1080 M615.00 813.4V1080 M648.75 813.4V1080 M682.50 813.4V1080 M713.75 813.4V1080 M738.75 813.4V1080 M765.00 813.4V1080 M813.75 813.4V1080 M847.50 813.4V1080 M888.75 813.4V1080 M896.00 813.4V1080 M928.75 813.4V1080 M962.50 813.4V1080 M993.75 813.4V1080 M1002.50 813.4V1080 M1036.25 813.4V1080 M1070.00 813.4V1080 M1101.25 813.4V1080 M1133.75 813.4V1080 M1152.50 813.4V1080 M1185.00 813.4V1080 M1201.25 813.4V1080 M1220.00 813.4V1080 M1242.50 813.4V1080 M1268.75 813.4V1080 M1285.00 813.4V1080 M1310.00 813.4V1080 M1342.50 813.4V1080 M1368.75 813.4V1080 M1391.25 813.4V1080 M1417.50 813.4V1080 M1448.75 813.4V1080 M1466.25 813.4V1080 M1482.50 813.4V1080 M1507.50 813.4V1080 M1523.75 813.4V1080 M1550.00 813.4V1080 M1563.75 813.4V1080 M1581.25 813.4V1080 M1605.00 813.4V1080 M1625.00 813.4V1080 M1640.00 813.4V1080 M1673.75 813.4V1080 M1687.50 813.4V1080 M1715.00 813.4V1080 M1729.80 813.4V1080 M1754.30 813.4V1080 M1787.30 813.4V1080 M1821.40 813.4V1080 M1838.40 813.4V1080 M1861.80 813.4V1080 M1885.30 813.4V1080 M1910.80 813.4V1080 M1970.40 813.4V1080 M1993.90 813.4V1080 M2026.90 813.4V1080" stroke="#d9d6e0" stroke-width="1.6" fill="none" opacity="0.55"/>
<path d="M141.6 928.8H2030" stroke="#fbfcfb" stroke-width="2" stroke-dasharray="10 7" fill="none" opacity="0.42"/>
<path d="M141.6 987.6H2030" stroke="#fbfcfb" stroke-width="2" stroke-dasharray="10 7" fill="none" opacity="0.42"/>
<path d="M141.6 1047.6H2030" stroke="#fbfcfb" stroke-width="2" stroke-dasharray="10 7" fill="none" opacity="0.42"/>
<g fill="#4c4c4c" stroke="#4c4c4c" stroke-width="0.8" font-size="22.6" letter-spacing="0.14" filter="url(#b1)" opacity="0.9">
<text transform="translate(155.4 823.2) rotate(-90)" text-anchor="end">c5m5_bridge</text>
<text transform="translate(172.3 823.2) rotate(-90)" text-anchor="end">c7m1_docks</text>
<text transform="translate(205.0 823.2) rotate(-90)" text-anchor="end">c7m2_barge</text>
<text transform="translate(225.6 823.2) rotate(-90)" text-anchor="end">c7m3_port</text>
<text transform="translate(246.7 823.2) rotate(-90)" text-anchor="end">c8m1_apartment</text>
<text transform="translate(280.2 823.2) rotate(-90)" text-anchor="end">c8m2_subway</text>
<text transform="translate(303.8 823.2) rotate(-90)" text-anchor="end">c8m3_sewers</text>
<text transform="translate(328.6 823.2) rotate(-90)" text-anchor="end">c8m4_interior</text>
<text transform="translate(353.4 823.2) rotate(-90)" text-anchor="end">c8m1_apartment</text>
<text transform="translate(370.8 823.2) rotate(-90)" text-anchor="end">c8m2_subway</text>
<text transform="translate(394.3 823.2) rotate(-90)" text-anchor="end">c8m3_sewers</text>
<text transform="translate(420.3 823.2) rotate(-90)" text-anchor="end">c8m4_interior</text>
<text transform="translate(460.8 823.2) rotate(-90)" text-anchor="end">c8m5_rooftop</text>
<text transform="translate(478.9 823.2) rotate(-90)" text-anchor="end">c10m1_caves</text>
<text transform="translate(512.2 823.2) rotate(-90)" text-anchor="end">c10m2_drainage</text>
<text transform="translate(535.2 823.2) rotate(-90)" text-anchor="end">c10m3_ranchhouse</text>
<text transform="translate(576.7 823.2) rotate(-90)" text-anchor="end">c10m4_mainstreet</text>
<text transform="translate(609.7 823.2) rotate(-90)" text-anchor="end">c10m5_houseboat</text>
<text transform="translate(641.9 823.2) rotate(-90)" text-anchor="end">c13m1_alpinecreek</text>
<text transform="translate(676.6 823.2) rotate(-90)" text-anchor="end">c13m2_southpinestream</text>
<text transform="translate(708.4 823.2) rotate(-90)" text-anchor="end">c13m3_memorialbridge</text>
<text transform="translate(732.5 823.2) rotate(-90)" text-anchor="end">c13m4_cutthroatcreek</text>
<text transform="translate(759.3 823.2) rotate(-90)" text-anchor="end">c3m1_plankcountry</text>
<text transform="translate(807.6 823.2) rotate(-90)" text-anchor="end">c3m2_swamp</text>
<text transform="translate(841.1 823.2) rotate(-90)" text-anchor="end">c3m3_shantytown</text>
<text transform="translate(881.6 823.2) rotate(-90)" text-anchor="end">c3m4_plantation</text>
<text transform="translate(889.5 823.2) rotate(-90)" text-anchor="end">c1m1_hotel</text>
<text transform="translate(921.9 823.2) rotate(-90)" text-anchor="end">c1m2_streets</text>
<text transform="translate(956.0 823.2) rotate(-90)" text-anchor="end">c1m3_mall</text>
<text transform="translate(993.6 823.2) rotate(-90)" text-anchor="end">c1m4_atrium</text>
<text transform="translate(998.9 823.2) rotate(-90)" text-anchor="end">c11m1_greenhouse</text>
<text transform="translate(1029.2 823.2) rotate(-90)" text-anchor="end">c11m2_offices</text>
<text transform="translate(1063.4 823.2) rotate(-90)" text-anchor="end">c11m3_garage</text>
<text transform="translate(1096.2 823.2) rotate(-90)" text-anchor="end">c11m4_terminal</text>
<text transform="translate(1130.9 823.2) rotate(-90)" text-anchor="end">c11m5_runway</text>
<text transform="translate(1146.3 823.2) rotate(-90)" text-anchor="end">c12m1_hilltop</text>
<text transform="translate(1178.6 823.2) rotate(-90)" text-anchor="end">c12m2_traintunnel</text>
<text transform="translate(1195.4 823.2) rotate(-90)" text-anchor="end">c12m3_bridge</text>
<text transform="translate(1211.8 823.2) rotate(-90)" text-anchor="end">c12m4_barn</text>
<text transform="translate(1237.1 823.2) rotate(-90)" text-anchor="end">c12m5_cornfield</text>
<text transform="translate(1261.4 823.2) rotate(-90)" text-anchor="end">c6m1_riverbank</text>
<text transform="translate(1278.0 823.2) rotate(-90)" text-anchor="end">c6m2_bedlam</text>
<text transform="translate(1302.1 823.2) rotate(-90)" text-anchor="end">c6m3_port</text>
<text transform="translate(1335.1 823.2) rotate(-90)" text-anchor="end">c7m1_docks</text>
<text transform="translate(1359.9 823.2) rotate(-90)" text-anchor="end">c7m2_barge</text>
<text transform="translate(1384.7 823.2) rotate(-90)" text-anchor="end">c7m3_port</text>
<text transform="translate(1409.5 823.2) rotate(-90)" text-anchor="end">c8m1_apartment</text>
<text transform="translate(1441.9 823.2) rotate(-90)" text-anchor="end">c8m2_subway</text>
<text transform="translate(1459.4 823.2) rotate(-90)" text-anchor="end">c8m3_sewers</text>
<text transform="translate(1476.0 823.2) rotate(-90)" text-anchor="end">c8m4_interior</text>
<text transform="translate(1501.5 823.2) rotate(-90)" text-anchor="end">c8m5_rooftop</text>
<text transform="translate(1516.9 823.2) rotate(-90)" text-anchor="end">c2m1_highway</text>
<text transform="translate(1541.7 823.2) rotate(-90)" text-anchor="end">c2m2_fairgrounds</text>
<text transform="translate(1556.6 823.2) rotate(-90)" text-anchor="end">c2m3_coaster</text>
<text transform="translate(1574.0 823.2) rotate(-90)" text-anchor="end">c2m4_barns</text>
<text transform="translate(1600.0 823.2) rotate(-90)" text-anchor="end">c2m5_concert</text>
<text transform="translate(1615.7 823.2) rotate(-90)" text-anchor="end">c5m1_waterfront</text>
<text transform="translate(1632.3 823.2) rotate(-90)" text-anchor="end">c5m2_park</text>
<text transform="translate(1664.6 823.2) rotate(-90)" text-anchor="end">c5m3_cemetery</text>
<text transform="translate(1681.2 823.2) rotate(-90)" text-anchor="end">c5m4_quarter</text>
<text transform="translate(1706.8 823.2) rotate(-90)" text-anchor="end">c5m5_bridge</text>
<text transform="translate(1723.6 823.2) rotate(-90)" text-anchor="end">c1m1_hotel</text>
<text transform="translate(1748.4 823.2) rotate(-90)" text-anchor="end">c1m2_streets</text>
<text transform="translate(1780.6 823.2) rotate(-90)" text-anchor="end">c1m3_mall</text>
<text transform="translate(1814.1 823.2) rotate(-90)" text-anchor="end">c1m4_atrium</text>
<text transform="translate(1830.3 823.2) rotate(-90)" text-anchor="end">c13m1_alpinecreek</text>
<text transform="translate(1855.1 823.2) rotate(-90)" text-anchor="end">c13m2_southpinestream</text>
<text transform="translate(1881.1 823.2) rotate(-90)" text-anchor="end">c13m3_memorialbridge</text>
<text transform="translate(1904.7 823.2) rotate(-90)" text-anchor="end">c13m4_cutthroatcreek</text>
<text transform="translate(1962.8 823.2) rotate(-90)" text-anchor="end">c3m1_plankcountry</text>
<text transform="translate(1987.4 823.2) rotate(-90)" text-anchor="end">c3m2_swamp</text>
<text transform="translate(2021.3 823.2) rotate(-90)" text-anchor="end">c3m3_shantytown</text>
</g>
<rect x="136.6" y="870.8" width="1898.4" height="2.7" fill="#666668" filter="url(#b2)"/>
<path d="M141.6 987.5h11.5" stroke="#8fb0b4" stroke-width="2" fill="none"/>
<path d="M141.6 1047h11.5" stroke="#8fb0b4" stroke-width="2" fill="none"/>
<path d="M192.2 923V1080" stroke="#ff0000" stroke-width="2.5" stroke-dasharray="10.8 6.6" fill="none"/>
<path d="M291.3 978V1080" stroke="#ff0000" stroke-width="2.5" stroke-dasharray="10.8 6.6" fill="none"/>
<path d="M885.9 1051V1080" stroke="#ff0000" stroke-width="2.5" stroke-dasharray="10.8 6.6" fill="none"/>
<path d="M985 890V1080" stroke="#ff0000" stroke-width="2.5" stroke-dasharray="10.8 6.6" fill="none"/>
<path d="M1084 892V1080" stroke="#ff0000" stroke-width="2.5" stroke-dasharray="10.8 6.6" fill="none"/>
<path d="M1183 1062V1080" stroke="#ff0000" stroke-width="2.5" stroke-dasharray="10.8 6.6" fill="none"/>
<path d="M1282 892V1080" stroke="#ff0000" stroke-width="2.5" stroke-dasharray="10.8 6.6" fill="none"/>
<path d="M1381 928.5V1080" stroke="#ff0000" stroke-width="2.5" stroke-dasharray="10.8 6.6" fill="none"/>
<path d="M1480 896V1080" stroke="#ff0000" stroke-width="2.5" stroke-dasharray="10.8 6.6" fill="none"/>
<path d="M1579 900V1080" stroke="#ff0000" stroke-width="2.5" stroke-dasharray="10.8 6.6" fill="none"/>
<path d="M1678 1001V1080" stroke="#ff0000" stroke-width="2.5" stroke-dasharray="10.8 6.6" fill="none"/>
<path d="M1876 1048V1080" stroke="#ff0000" stroke-width="2.5" stroke-dasharray="10.8 6.6" fill="none"/>
<path d="M1975 1030V1080" stroke="#ff0000" stroke-width="2.5" stroke-dasharray="10.8 6.6" fill="none"/>
<path d="M1777 1049V1080" stroke="#ff0000" stroke-width="2.4" fill="none"/>
<path d="M141.8 1071.2 L276.2 1047.5" stroke="#ffa200" stroke-width="2.2" fill="none" stroke-linejoin="round"/>
<path d="M285.0 1045.0 L301.0 1044.5" stroke="#ffa200" stroke-width="2.2" fill="none" stroke-linejoin="round"/>
<path d="M300.0 1050.0 L306.5 1082.0" stroke="#ffa200" stroke-width="2.2" fill="none" stroke-linejoin="round"/>
<path d="M1595.0 1080.5 L1660.0 1072.0 L1665.3 1082.0" stroke="#ffa200" stroke-width="2.2" fill="none" stroke-linejoin="round"/>
<path d="M1714.5 1082.0 L1719.0 1064.7 L1775.6 1055.0 L1825.6 1048.3 L1924.7 1033.8 L1934.3 1082.0" stroke="#ffa200" stroke-width="2.2" fill="none" stroke-linejoin="round"/>
<path d="M1966.0 1078.0 L1974.7 1026.4 L2032.0 1018.7" stroke="#ffa200" stroke-width="2.2" fill="none" stroke-linejoin="round"/>
<path d="M141.7 889.4 L149.4 902.4 L158.5 902.4 L168.9 898.5 L176.7 902.4 L193.5 924.4 L200.0 940.0 L209.0 941.3 L225.9 965.9 L233.7 965.9 L242.8 946.5 L248.0 960.7 L258.3 975.0 L275.2 959.5 L291.3 977.6 L299.8 968.5 L303.7 986.7 L316.7 1082.0 M854.5 1082.0 L860.9 1059.3 L876.5 1042.4 L885.6 1051.5 L893.3 1030.7 L902.4 1023.0 L919.3 1006.1 L927.0 963.3 L942.6 932.2 L958.2 885.6 L977.6 885.6 L994.5 894.6 L1000.9 911.5 L1010.0 907.6 L1019.1 911.5 L1033.3 895.9 L1042.4 880.4 L1051.5 884.3 L1059.3 883.0 L1067.0 892.0 L1074.8 885.6 L1083.9 892.0 L1091.7 885.6 L1100.7 885.6 L1116.3 918.0 L1125.4 923.2 L1134.5 981.5 L1161.7 1082.0 M1177.5 1082.0 L1190.0 1043.7 L1199.0 981.5 L1213.3 924.4 L1223.7 895.9 L1231.5 885.6 L1239.3 880.4 L1248.3 890.7 L1256.1 893.3 L1265.2 890.7 L1273.0 885.6 L1281.3 892.0 L1289.8 880.4 L1296.3 883.0 L1305.4 883.0 L1314.4 890.7 L1323.5 890.7 L1331.3 902.4 L1339.1 893.3 L1348.2 908.9 L1355.9 919.3 L1363.7 912.8 L1380.6 928.3 L1397.4 914.1 L1405.2 912.8 L1414.3 902.4 L1422.0 907.6 L1431.1 902.4 L1438.9 902.4 L1446.7 914.1 L1454.5 920.6 L1479.6 895.9 L1495.9 875.2 L1503.7 875.2 L1511.5 880.4 L1520.6 880.4 L1529.6 884.3 L1545.2 890.7 L1553.0 890.7 L1562.0 893.3 L1569.8 890.7 L1578.4 899.8 L1586.7 898.5 L1598.3 899.8 L1604.8 903.7 L1612.6 919.3 L1620.4 924.4 L1628.2 941.3 L1645.0 967.2 L1652.8 986.7 L1660.6 1015.2 L1669.6 1000.9 L1677.4 1000.9 L1686.5 991.9 L1702.0 941.3 L1709.8 956.9 L1721.5 955.0 L1730.0 960.7 L1737.5 966.2 L1761.0 1036.6 L1769.0 1046.0 L1776.5 1049.2 L1798.9 989.6 L1808.0 986.8 L1818.8 1004.0 L1842.2 1031.2 L1847.0 1045.0 L1853.0 1082.0 " stroke="#2424ff" stroke-width="2.15" fill="none" stroke-linejoin="round"/>
<path d="M142.6 1080V814.4H2030" stroke="#b9c4c4" stroke-width="2" fill="none" opacity="0.8"/>
</g></svg>
</div>
<div id="status">
<span class="t" style="left:35.18px;top:19.59px;font-size:28.60px;font-weight:bold;color:#5c5c5c;transform:scaleX(0.9816);">10:18</span>
<span class="t" style="left:1946.19px;top:19.93px;font-size:25.60px;font-weight:bold;color:#5a5a5a;transform:scaleX(0.9484);">89%</span>
<svg style="position:absolute;left:0;top:0" width="2030" height="66" viewBox="0 0 2030 66"><path d="M1787.03 28.19 A22.9 22.9 0 0 1 1819.97 28.19" fill="none" stroke="#2e2e2e" stroke-width="3.4" stroke-linecap="round"/><path d="M1793.06 32.51 A15.6 15.6 0 0 1 1813.94 32.51" fill="none" stroke="#2e2e2e" stroke-width="3.4" stroke-linecap="round"/><path d="M1798.45 37.64 A8.2 8.2 0 0 1 1808.55 37.64" fill="none" stroke="#2e2e2e" stroke-width="3.4" stroke-linecap="round"/><circle cx="1803.5" cy="44.1" r="2.5" fill="#2e2e2e"/><line x1="1839.1" y1="37.9" x2="1839.1" y2="42.5" stroke="#2a2a2a" stroke-width="3.3" stroke-linecap="round"/><line x1="1846.7" y1="36.0" x2="1846.7" y2="42.5" stroke="#2a2a2a" stroke-width="3.3" stroke-linecap="round"/><line x1="1854.1" y1="33.2" x2="1854.1" y2="42.5" stroke="#2a2a2a" stroke-width="3.3" stroke-linecap="round"/><line x1="1861.3" y1="27.9" x2="1861.3" y2="42.5" stroke="#cfcfcf" stroke-width="3.3" stroke-linecap="round"/><line x1="1868.9" y1="21.6" x2="1868.9" y2="42.5" stroke="#cfcfcf" stroke-width="3.3" stroke-linecap="round"/><rect x="1886.7" y="21.9" width="46.6" height="21.6" rx="3.6" ry="3.6" fill="#fff" stroke="#333" stroke-width="1.7"/><rect x="1889.1" y="24.2" width="40" height="17" rx="1.6" ry="1.6" fill="#333"/><path d="M1934.6 29.4 Q1939.6 32.7 1934.6 36.1 Z" fill="#333"/></svg>
</div>
<div id="nav">
<svg style="position:absolute;left:0;top:0" width="130" height="1080" viewBox="2030 0 130 1080">
<path d="M2105.4 302.8 L2089.6 317 L2105.4 331.2" fill="none" stroke="#8a8a8a" stroke-width="3.2" stroke-linecap="round" stroke-linejoin="round"/>
<rect x="2080.4" y="527" width="28.2" height="27.4" rx="5.5" ry="5.5" fill="none" stroke="#8a8a8a" stroke-width="3.3"/>
<path d="M2080.8 750.9 H2109.2 M2080.8 763.4 H2109.2 M2080.8 776 H2109.2" fill="none" stroke="#8a8a8a" stroke-width="2.6" stroke-linecap="round"/>
</svg>
</div>
</body>
</html>
